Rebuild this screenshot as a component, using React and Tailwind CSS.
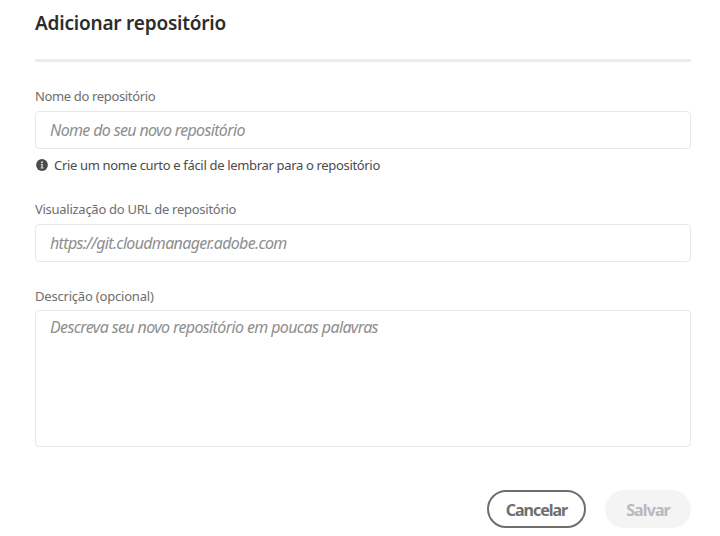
const fieldBox =
  'block w-full rounded-[4px] border border-[#e8e8e8] bg-white px-[14px] font-["Noto_Sans",sans-serif] text-[16px] italic text-[#4b4b4b] outline-none placeholder:text-[#8e8e8e] placeholder:opacity-100';

function Label({ htmlFor, className, children }) {
  return (
    <label htmlFor={htmlFor} className={`block h-5 whitespace-nowrap text-[13px] leading-5 text-[#6e6e6e] ${className}`}>
      {children}
    </label>
  );
}

function InfoIcon() {
  return (
    <svg className="h-3 w-3 shrink-0" viewBox="0 0 12 12" aria-hidden="true">
      <circle cx="6" cy="6" r="5.9" fill="#4b4b4b" />
      <circle cx="6" cy="3.2" r="1" fill="#dcdcdc" />
      <path d="M4.8 5h1.9v3.5h.7v.9H4.7v-.9h.7V5.9h-.6z" fill="#dcdcdc" />
    </svg>
  );
}

export default function App() {
  return (
    <main className='h-[536px] w-[720px] overflow-hidden bg-white pl-[35px] pr-[29px] font-["Noto_Sans",sans-serif]'>
      <header className="h-[62px] border-b-[3px] border-[#ececec] pt-[9px]">
        <h1 className="whitespace-nowrap text-[19px] font-semibold leading-7 tracking-[-0.2px] text-[#2c2c2c]">
          Adicionar repositório
        </h1>
      </header>
      <form>
        <section className="pt-6">
          <Label htmlFor="name" className="tracking-[-0.35px]">Nome do repositório</Label>
          <input id="name" placeholder="Nome do seu novo repositório" className={`${fieldBox} mt-[5px] h-[38px] pb-px tracking-[-0.65px]`} />
          <div className="mt-[6px] flex h-5 items-center gap-[6px] pl-px text-[13px] leading-5 tracking-[-0.33px] text-[#4b4b4b]">
            <InfoIcon />
            <span className="whitespace-nowrap">Crie um nome curto e fácil de lembrar para o repositório</span>
          </div>
        </section>
        <section className="pt-6">
          <Label htmlFor="url" className="tracking-[-0.27px]">Visualização do URL de repositório</Label>
          <input id="url" placeholder="https://git.cloudmanager.adobe.com" className={`${fieldBox} mt-[5px] h-[38px] pb-0 tracking-[-0.67px]`} />
        </section>
        <section className="pt-6">
          <Label htmlFor="description" className="tracking-[-0.2px]">Descrição (opcional)</Label>
          <textarea id="description" placeholder="Descreva seu novo repositório em poucas palavras" className={`${fieldBox} mt-1 h-[137px] resize-none pt-[5px] leading-[22px] tracking-[-0.62px]`} />
        </section>
        <div className="flex justify-end gap-[19px] pt-[43px]">
          <button type="button" className="h-[38px] w-[99px] rounded-full border-2 border-[#6e6e6e] pt-[2px] text-[16px] font-bold tracking-[-1px] text-[#6e6e6e]">
            Cancelar
          </button>
          <button type="button" disabled className="h-[38px] w-[86px] rounded-full bg-[#f4f4f4] pt-[2px] text-[16px] font-bold tracking-[-0.9px] text-[#b9b9b9]">
            Salvar
          </button>
        </div>
      </form>
    </main>
  );
}
